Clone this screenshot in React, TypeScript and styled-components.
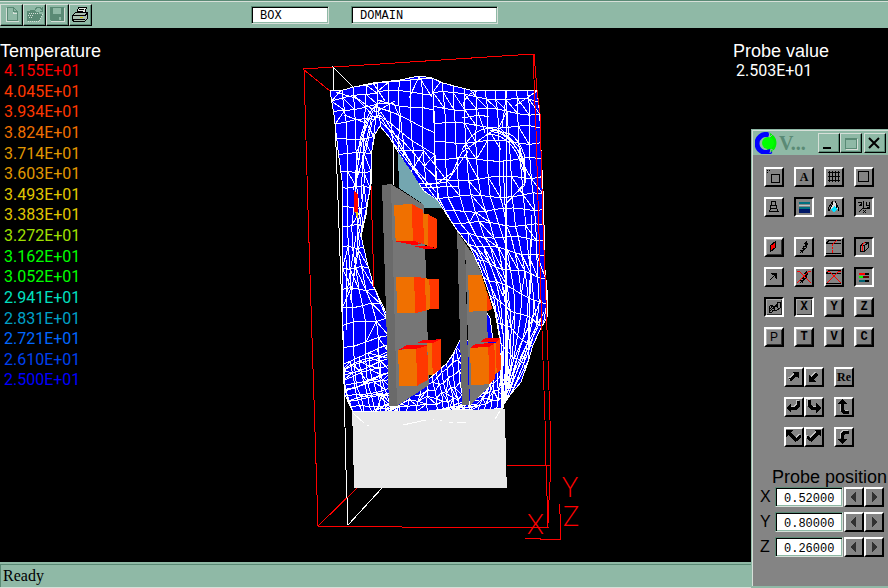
import React from "react";
import styled, { createGlobalStyle, css } from "styled-components";

const green = "#8fb9a6";
const darkGreen = "#5a8a75";
const paleGreen = "#d6dfd8";
const grey = "#848484";

const GlobalStyle = createGlobalStyle`
  * { box-sizing: border-box; }
  body { margin: 0; background: #000; font-family: "Liberation Sans", Arial, sans-serif; }
  button, input { font: inherit; margin: 0; padding: 0; border-radius: 0; }
  h1, h2, p, ul { margin: 0; padding: 0; font-weight: normal; }
  svg { display: block; }
`;

const Page = styled.div`
  position: relative;
  min-height: 100vh;
  display: flex;
  flex-direction: column;
  background: #000;
`;

const Toolbar = styled.header`
  display: flex;
  align-items: center;
  height: 28px;
  border-top: 1px solid ${darkGreen};
  box-shadow: inset 0 1px ${paleGreen};
  background: ${green};
`;

const ToolButton = styled.button`
  width: 23px;
  height: 22px;
  margin-top: 1px;
  background: ${green};
  border: 1px solid;
  border-color: ${paleGreen} #000 #000 ${paleGreen};
  box-shadow: inset -1px -1px ${darkGreen};
`;

const Fields = styled.div`
  display: flex;
  gap: 22px;
  margin-left: 159px;
`;

const Field = styled.input<{ $width: number }>`
  width: ${(p) => p.$width}px;
  height: 18px;
  padding: 3px 0 0 8px;
  font: 12px/14px "Liberation Mono", monospace;
  color: #000;
  background: #fff;
  border: 1px solid;
  border-color: ${darkGreen} ${paleGreen} ${paleGreen} ${darkGreen};
  box-shadow: inset 1px 1px #000, inset -1px -1px ${green};
  outline: none;
`;

const View = styled.main`
  flex: 1;
  display: grid;
  grid-template-columns: 1fr 300px 1fr;
  color: #fff;
`;

const Legend = styled.section`
  padding-top: 13px;
`;

const Caption = styled.h2`
  font-size: 18px;
  line-height: 20px;
`;

const Scale = styled.ul`
  display: grid;
  grid-auto-rows: 1fr;
  height: 330px;
  padding-left: 4px;
  list-style: none;
`;

const Reading = styled.li<{ $color: string }>`
  color: ${(p) => p.$color};
  font: 16px/20px Roboto, sans-serif;
`;

const Probe = styled.section`
  justify-self: end;
  width: 155px;
  padding-top: 13px;
`;

const ProbeValue = styled.p`
  padding-left: 3px;
  font: 16px/20px Roboto, sans-serif;
`;

const StatusBar = styled.footer`
  height: 26px;
  padding: 2px 3px;
  font: 16px/20px "Liberation Serif", serif;
  color: #000;
  background: ${green};
  border-top: 2px solid ${green};
  border-bottom: 1px solid ${paleGreen};
  box-shadow: inset 1px 1px ${darkGreen};
`;

const Window = styled.aside`
  position: absolute;
  right: 0;
  bottom: 0;
  width: 137px;
  background: ${grey};
  border: 1px solid ${green};
  border-width: 1px 0 2px 1px;
  box-shadow: inset 1px 1px ${paleGreen};
  padding: 1px 0 0 2px;
`;

const TitleBar = styled.div`
  display: flex;
  align-items: center;
  height: 24px;
  margin-left: -1px;
  padding: 0 2px 0 2px;
  background: ${green};
`;

const Title = styled.h1`
  flex: 1;
  margin-left: 2px;
  font: bold 20px/24px "Liberation Serif", serif;
  color: ${darkGreen};
`;

const WindowButton = styled.button`
  width: 22px;
  height: 20px;
  background: ${green};
  border: 1px solid;
  border-color: ${paleGreen} #000 #000 ${paleGreen};
  box-shadow: inset -1px -1px ${darkGreen};
  &:last-child { margin-left: 2px; }
`;

const Tools = styled.div`
  display: grid;
  grid-template-columns: repeat(4, 20px);
  gap: 10px;
  padding: 12px 0 0 10px;
  & + & { padding-top: 20px; }
`;

const Moves = styled.div`
  display: grid;
  grid-template-columns: 20px 30px 20px;
  row-gap: 10px;
  padding: 20px 0 0 30px;
`;

const IconButton = styled.button<{ $pressed?: boolean; $framed?: boolean; $font?: string }>`
  width: 20px;
  height: 20px;
  color: #000;
  background: ${grey};
  border: 2px solid;
  text-align: center;
  font: ${(p) => p.$font ?? 'bold 12px/14px "Liberation Mono", monospace'};
  ${(p) =>
    p.$pressed
      ? css`border-color: #000 #fff #fff #000;`
      : css`border-color: #fff #000 #000 #fff;`}
  ${(p) => p.$framed && css`box-shadow: inset 1px 1px #adadad, inset -1px -1px #303030;`}
`;

const Position = styled.section`
  padding: 20px 0 29px 6px;
`;

const PositionTitle = styled(Caption)`
  padding-left: 12px;
  color: #000;
  white-space: nowrap;
`;

const Axis = styled.div`
  display: flex;
  align-items: center;
  height: 20px;
  & + & { margin-top: 5px; }
`;

const AxisLabel = styled.label`
  width: 15px;
  font-size: 16px;
  line-height: 20px;
  color: #000;
`;

const AxisField = styled(Field)`
  height: 20px;
  margin-right: 1px;
`;

const Scene = styled.svg`
  width: 100%;
  height: auto;
`;

const readings: [string, string][] = [
  ["4.155E+01", "#ff0000"],
  ["4.045E+01", "#ff3800"],
  ["3.934E+01", "#ff3800"],
  ["3.824E+01", "#f07000"],
  ["3.714E+01", "#e09800"],
  ["3.603E+01", "#e09800"],
  ["3.493E+01", "#e0c800"],
  ["3.383E+01", "#e0c800"],
  ["3.272E+01", "#a0e000"],
  ["3.162E+01", "#00ff00"],
  ["3.052E+01", "#00ff00"],
  ["2.941E+01", "#00e0c0"],
  ["2.831E+01", "#00a0c8"],
  ["2.721E+01", "#0068ff"],
  ["2.610E+01", "#0040f0"],
  ["2.500E+01", "#0000ff"],
];

type Point = [number, number];
type Curve = Point[];

const toPath = (c: Curve) => "M" + c.map(([x, y]) => `${x.toFixed(1)} ${y.toFixed(1)}`).join("L");

const between = (a: Curve, b: Curve, t: number): Curve =>
  a.map(([x, y], i) => [x + (b[i][0] - x) * t, y + (b[i][1] - y) * t]);

const along = (c: Curve, t: number): Point => {
  const s = Math.min(t, 0.9999) * (c.length - 1);
  const i = Math.floor(s);
  const f = s - i;
  return [c[i][0] + (c[i + 1][0] - c[i][0]) * f, c[i][1] + (c[i + 1][1] - c[i][1]) * f];
};

/* A surface patch stretched between two curves: its rows, columns and some diagonals. */
function patch(a: Curve, b: Curve, cols: number, rows: number, diagonals: number): string {
  const out: string[] = [];
  const at = (i: number, j: number): Point => {
    const p = along(between(a, b, i / cols), j / rows);
    const inner = i > 0 && i < cols && j > 0 && j < rows;
    return inner ? [p[0] + Math.sin(i * 5 + j * 0.8), p[1] + Math.sin(i * 0.9 + j * 3) * 2] : p;
  };
  for (let i = 0; i <= cols; i++) {
    out.push(toPath(Array.from({ length: rows + 1 }, (_, j) => at(i, j))));
  }
  for (let j = 0; j <= rows; j++) {
    out.push(toPath(Array.from({ length: cols + 1 }, (_, i) => at(i, j))));
  }
  for (let i = 0; i < cols; i++) {
    for (let j = 0; j < rows; j++) {
      const pick = (i * 7 + j * 11 + i * j * 3) % 10;
      if (pick < diagonals) {
        out.push(pick % 2 ? toPath([at(i, j), at(i + 1, j + 1)]) : toPath([at(i + 1, j), at(i, j + 1)]));
      }
    }
  }
  return out.join("");
}

const leftEdge: Curve = [[330, 91], [334, 115], [338, 150], [342, 190], [343, 236], [342, 287], [343, 330], [344, 385], [353, 412]];
const holeLeft: Curve = [[378, 83], [377, 108], [372, 150], [370, 190], [361, 236], [374, 287], [388, 322], [390, 365], [398, 412]];
const holeRight: Curve = [[432, 78], [434, 110], [434, 150], [437, 195], [452, 223], [470, 247], [486, 285], [499, 335], [502, 411]];
const rightEdge: Curve = [[537, 90], [540, 117], [541, 150], [543, 190], [544, 225], [545, 260], [547, 317], [528, 362], [503, 408]];

const mesh = [
  patch(leftEdge, holeLeft, 4, 19, 3),
  patch([[378, 83], [377, 100], [379, 115], [381, 127]], [[432, 78], [434, 110], [435, 155], [438, 201]], 5, 6, 1),
  patch(holeRight, rightEdge, 10, 18, 2),
  patch([[342, 365], [344, 388], [353, 412]], [[386, 345], [392, 375], [400, 411]], 5, 9, 3),
  patch([[398, 398], [432, 375], [460, 340]], [[375, 411], [438, 411], [470, 409]], 5, 12, 3),
  patch([[466, 405], [488, 390], [502, 350]], [[430, 411], [475, 411], [503, 408]], 5, 9, 2),
].join("");

const folds = [
  "M357 160Q363 110 380 103L394 104 400 118 398 150",
  "M355 200Q359 120 382 100M353 190L366 150 372 122 381 112 397 138 412 165 436 192",
  "M361 200L363 155 372 116 382 119 400 147 424 183",
  "M344 115L366 123M336 92L358 99 376 112 395 101M373 83L385 101M409 98L419 77 432 97",
  "M409 175L424 151M424 151L445 178M400 150L424 151",
  "M417 183L436 184 452 173 462 152 491 132Q506 130 523 158L525 185 514 195",
  "M462 150Q478 120 502 132Q516 132 524 154L526 182 505 205M485 133L478 112",
  "M490 130Q512 130 524 165M488 134Q514 135 523 170M500 128L520 148 526 178",
  "M463 106Q466 91 483 90M462 118L480 115 489 117M515 106L537 91M507 90L502 128",
  "M506 100L506 404M503 160L505 205 505 400M501 150L490 132",
  "M532 215L530 280 528 360M531 240L529 350",
  "M425 185L447 182 468 151M422 188L458 186",
  "M360 155L355 180 358 232M355 170L362 235M368 118L358 150",
  "M347 292L356 236M352 290L359 232M346 330L346 260M350 300L360 240",
  "M541 320L520 365 502 404M544 312L524 350 502 398M541 300L518 350 501 390M478 262L499 320",
  "M475 250L497 300 504 340M484 250L503 296",
].join("");

const surface =
  "330,91 343,90 354,87 373,83 400,80 419,76 432,78 443,83 458,87 470,90 537,90 540,117 541,150 543,190 544,225 544,260 547,290 547,317 540,330 533,345 528,362 521,382 510,395 504,404 502,411 353,412 345,395 344,370 343,340 342,290 343,225 342,180 338,150 334,115";

function HeatScene() {
  return (
    <Scene viewBox="294 28 300 534" role="img" aria-label="Temperature surface over the domain" shapeRendering="crispEdges">
      <clipPath id="surface"><polygon points={surface} /></clipPath>
      <g fill="none" stroke="#fff">
        <path d="M353 87L333 67L338 200L343 340L346 470L348 525L382 488" />
      </g>
      <polygon points={surface} fill="#0000ff" stroke="#fff" />
      <g clipPath="url(#surface)" fill="none" stroke="#fff">
        <path d={mesh} />
        <path d={folds} />
      </g>
      <polygon
        points="380,126 375,134 372,150 371,185 368,200 366,215 361,236 367,262 374,287 381,302 387,315 390,370 428,380 437,372 447,363 453,354 460,340 480,340 487,313 490,318 493,340 500,340 495,312 488,290 481,270 470,247 457,230 447,215 438,201 424,191 412,175 398,152 390,138"
        fill="#000"
        stroke="#fff"
      />
      <polygon points="398,152 399,188 423,204 424,208 442,208 437,200 423,191 415,177" fill="#74a6b0" />
      <path d="M371 185L374 287" stroke="#f00" />
      <path d="M393 140L394 185" stroke="#fff" />
      <polygon points="382,185 391,184 397,406 389,406" fill="#6a6a6a" />
      <polygon points="391,184 424,205 429,385 397,406" fill="#767676" />
      <polygon points="457,231 465,243 469,405 462,405" fill="#6a6a6a" />
      <polygon points="465,243 474,256 482,275 487,313 489,386 470,405" fill="#767676" />
      <polygon points="354,191 358,195 358,212 354,212" fill="#f00" />
      <polygon points="355,212 358,212 358,219" fill="#e0c800" />
      <g transform="translate(290 200) scale(.3333)">
        <g fill="#f07000">
          <polygon points="312,15 365,12 369,122 317,124" />
          <polygon points="399,40 413,42 414,138 402,132" />
          <polygon points="318,232 372,230 376,339 322,340" />
          <polygon points="405,234 418,237 421,327 408,332" />
          <polygon points="324,450 378,446 382,557 328,557" />
          <polygon points="412,430 426,430 428,525 414,525" />
          <polygon points="534,226 575,225 592,280 592,333 538,335" />
          <polygon points="540,443 595,441 598,553 544,555" />
          <polygon points="612,430 618,427 620,520 615,522" />
        </g>
        <g fill="#ff3800">
          <polygon points="365,12 399,30 402,132 369,122" />
          <polygon points="413,42 441,57 442,145 414,138" />
          <polygon points="372,230 405,234 408,332 376,339" />
          <polygon points="418,237 447,238 448,327 421,327" />
          <polygon points="378,446 412,436 414,540 382,557" />
          <polygon points="426,430 452,418 453,507 428,525" />
          <polygon points="592,278 608,327 592,333" />
          <polygon points="595,441 613,430 616,535 598,553" />
          <polygon points="618,427 629,415 634,508 620,522" />
        </g>
        <g fill="#ff0000">
          <polygon points="317,124 369,122 402,133 365,134" />
          <polygon points="369,138 414,138 444,147 400,146" />
          <polygon points="326,449 352,435 412,436 378,447" />
          <polygon points="378,430 400,420 452,418 426,430" />
          <polygon points="542,443 558,431 613,430 595,442" />
          <polygon points="570,426 585,415 629,415 618,427" />
        </g>
      </g>
      <polygon points="352,412 505,409 506,465 507,488 354,488 353,440" fill="#e8e8e8" />
      <path d="M353 413L364 423M367 425h2M403 425L426 420M433 419h1M440 420h2M449 422h4M457 422h9M500 411L495 419" fill="none" stroke="#fff" />
      <g fill="none" stroke="#f00">
        <path d="M330 91L303 69L533 54L536 130L538 200L541 300L545 420L546 465L548 527H402L318 526L357 488M304 69L308 210L311 306L314 400L318 526" />
        <path d="M534 54L537 90L540 113L543 225L546 300L547 330L550 420L551 465L549 500L548 524M507 465H551" />
        <path d="M525 538H540V539H560V514L559 504" />
      </g>
      <g fill="#f00" fontFamily="Lato" fontWeight="300" fontSize="27">
        <text x="527" y="534">X</text>
        <text x="562" y="497">Y</text>
        <text x="563" y="526">Z</text>
      </g>
    </Scene>
  );
}

const Glyph = ({ children }: { children: React.ReactNode }) => (
  <svg viewBox="2 2 16 16" width="16" height="16" shapeRendering="crispEdges" fill="none" stroke="#000" aria-hidden="true">
    {children}
  </svg>
);

const Squiggle = () => <path d="M13 4l-2 3v2l-2 2v2l-3 3M14 6l-2 3v2l-3 3-1 2M10 6h4M9 9h4M8 11l3 1M6 13l3 1" />;
const Slab = () => <path d="M2 6.500h15M2 16.500h15M5 3.500h12M5 3.500l-3 3" />;
const Cross = () => <path stroke="#f00" d="M3 4l2 0 10 10 2 2M17 4h-2L5 14l-2 2" />;

const upperTools: { name: string; pressed?: boolean; framed?: boolean; font?: string; face: React.ReactNode }[] = [
  { name: "Select", face: <Glyph><path d="M3 3.500h1M5 3.500h1M3 5.500h1" /><rect x="7.500" y="7.500" width="8" height="8" /></Glyph> },
  { name: "Text", font: 'bold 12px/14px "Liberation Serif", serif', face: "A" },
  { name: "Grid", face: <Glyph><path d="M5.500 4v11M8.500 4v11M11.500 4v11M14.500 4v11M4 5.500h12M4 9.500h12M4 13.500h12" /></Glyph> },
  { name: "Outline", face: <Glyph><rect x="4.500" y="4.500" width="10" height="10" /></Glyph> },
  { name: "Perspective", face: <Glyph><path d="M7.500 8.500v-4h4v4M6.500 11.500v-3h6v3M5.500 14.500l1-3h6l2 3z" /></Glyph> },
  { name: "Contour", pressed: true, face: <Glyph><g stroke="none"><path fill="#007080" d="M5 5h11v2H5zM5 10h11v2H5z" /><path fill="#b8c8cc" d="M5 8h11v1H5z" /><path fill="#001868" d="M5 12h11v4H5z" /></g></Glyph> },
  { name: "Light", face: <Glyph><path fill="#e0e0e0" stroke="none" d="M9 5h2l3 7H7z" /><path d="M4 14l1-4 4-6M5 14l4-8M11 4l3 6 1 4M12 6l1 5" /><path fill="#00e0ff" stroke="none" d="M10 9l3 3-2 3h-2l-2-3z" /></Glyph> },
  {
    name: "Axes",
    pressed: true,
    face: (
      <Glyph>
        <path d="M9.500 4v7M9 11.500h7M9 11l-4 4M9 13l3 3M12 13l-3 3M4 5.500h3v2l-2 1h3M12.500 5v3h3M15.500 5v5h-3" />
      </Glyph>
    ),
  },
];

const lowerTools: typeof upperTools = [
  { name: "Plane", framed: true, face: <Glyph><path fill="#f00" d="M6.500 14.500v-6l5-4v6z" /></Glyph> },
  { name: "Path", face: <Glyph><Squiggle /></Glyph> },
  { name: "Section", face: <Glyph><Slab /><path stroke="#f00" d="M13 3l-4 4M8.500 7v2M8.500 10v2M8.500 13v3" /></Glyph> },
  { name: "Solid", pressed: true, face: <Glyph><path d="M6.500 14.500v-6h4v6zM6.500 8.500l4-3h4v5l-4 4M10.500 8.500l4-3" /><path stroke="#f00" d="M8 14V8l3-3" /></Glyph> },
  { name: "Vector", face: <Glyph><path d="M6 13l6-6M7 6.500h5.500V12M8 7.500h4M11.500 8v3" /></Glyph> },
  { name: "Clear path", face: <Glyph><Squiggle /><Cross /></Glyph> },
  { name: "Clear section", face: <Glyph><Slab /><Cross /></Glyph> },
  { name: "Legend", pressed: true, face: <Glyph><g stroke="none"><path fill="#f00" d="M5 6h6v2H5z" /><path d="M11 6h4v2h-4z" fill="#000" /><path fill="#0f0" d="M5 9h4v2H5z" /><path fill="#500" d="M9 9h6v2H9z" /><path fill="#006070" d="M5 13h6v2H5z" /><path fill="#000" d="M11 13h4v2h-4z" /></g></Glyph> },
  { name: "Duct", pressed: true, framed: true, face: <Glyph><path d="M5 10l2-2 3 2 3-3V5h3v6l-3 2H9l-1 2H5zM7 8v3l-2 2M10 10v3M13 7l1 4M8 12l6-4M6 14l4-4" /></Glyph> },
  { name: "X plane", pressed: true, framed: true, face: "X" },
  { name: "Y plane", framed: true, face: "Y" },
  { name: "Z plane", framed: true, face: "Z" },
  { name: "Pressure", framed: true, font: '12px/14px "Liberation Sans", sans-serif', face: "P" },
  { name: "Temperature", framed: true, face: "T" },
  { name: "Velocity", framed: true, face: "V" },
  { name: "Concentration", framed: true, face: "C" },
];

const Arrow = ({ d, head }: { d: string; head: string }) => (
  <Glyph>
    <path d={d} stroke="#c0c0c0" strokeWidth="3" transform="translate(-1 -1)" />
    <path d={d} strokeWidth="3" />
    <path d={head} fill="#000" stroke="none" />
  </Glyph>
);

const moves: { name: string; font?: string; face: React.ReactNode }[] = [
  { name: "Zoom in", face: <Arrow d="M6 13L12 8" head="M8 5h7v7z" /> },
  { name: "Zoom out", face: <Arrow d="M13 7L8 12" head="M5 8v7h7z" /> },
  { name: "Reset", font: 'bold 12px/14px "Liberation Serif", serif', face: "Re" },
  { name: "Turn left", face: <Arrow d="M14 4V9L12 11H6" head="M2 11l5-5v10z" /> },
  { name: "Turn right", face: <Arrow d="M5 3V8L8 11H13" head="M17 11l-5-5v10z" /> },
  { name: "Tilt up", face: <Arrow d="M8 7V13L10 15H15" head="M8 2l5 5H3z" /> },
  { name: "Roll left", face: <Arrow d="M5 6L12 13L17 9" head="M2 3h7l-7 7z" /> },
  { name: "Roll right", face: <Arrow d="M3 10L7 13L14 6" head="M17 3h-7l7 7z" /> },
  { name: "Tilt down", face: <Arrow d="M15 5H11L8 8V12" head="M8 17l-5-5h10z" /> },
];

const axes = [
  { name: "X", value: "0.52000" },
  { name: "Y", value: "0.80000" },
  { name: "Z", value: "0.26000" },
];

const ToolGlyph = ({ children }: { children: React.ReactNode }) => (
  <svg viewBox="1 1 21 20" width="21" height="20" shapeRendering="crispEdges" fill="none" stroke={darkGreen} aria-hidden="true">
    {children}
  </svg>
);

function FileTools() {
  return (
    <>
      <ToolButton aria-label="New">
        <ToolGlyph>
          <path stroke={paleGreen} d="M6.500 4v13.500h12M13 4v5h5" />
          <path d="M7.500 16.500v-13h6l4 4v9zM13.500 3.500v4h4" />
        </ToolGlyph>
      </ToolButton>
      <ToolButton aria-label="Open">
        <ToolGlyph>
          <path fill={darkGreen} d="M4.500 16.500v-9h2l1-1h4l1 2h3v2h4l-4 6z" />
          <path stroke={paleGreen} strokeDasharray="1 1" d="M6 9h9M5 11h5M6 13h3M5 17.500h11l4-7" />
          <path d="M12 5.500l2-2h3l2 2M19.500 3v4h-3" />
        </ToolGlyph>
      </ToolButton>
      <ToolButton aria-label="Save">
        <ToolGlyph>
          <path fill={darkGreen} d="M4.500 3.500h13v13h-12l-1-1z" />
          <path fill={green} stroke="none" d="M7 4h8v6H7zM13 13h2v3h-2z" />
          <path stroke={paleGreen} d="M5 17.500h13.500V4" />
        </ToolGlyph>
      </ToolButton>
      <ToolButton aria-label="Print">
        <ToolGlyph>
          <path stroke="#000" fill="#e4ece4" d="M7.500 9.500l2-6h8l-2 6z" />
          <path stroke="#000" d="M10 5.500h5M9 7.500h5" />
          <path stroke="#000" fill="#a8c0b0" d="M3.500 11.500l3-3h11l1 2v4l-3 3h-11l-1-2z" />
          <path stroke="#000" d="M4 11.500h12l3-3M4 15.500h12" />
          <path stroke="#d0c000" d="M11 13.500h3" />
        </ToolGlyph>
      </ToolButton>
    </>
  );
}

export default function App() {
  return (
    <Page>
      <GlobalStyle />
      <Toolbar>
        <FileTools />
        <Fields>
          <Field aria-label="Object type" $width={78} defaultValue="BOX" />
          <Field aria-label="Object name" $width={147} defaultValue="DOMAIN" />
        </Fields>
      </Toolbar>
      <View>
        <Legend>
          <Caption>Temperature</Caption>
          <Scale>
            {readings.map(([value, color]) => (
              <Reading key={value} $color={color}>{value}</Reading>
            ))}
          </Scale>
        </Legend>
        <HeatScene />
        <Probe>
          <Caption>Probe value</Caption>
          <ProbeValue>2.503E+01</ProbeValue>
        </Probe>
      </View>
      <StatusBar>Ready</StatusBar>
      <Window>
        <TitleBar>
          <svg viewBox="0 0 22 22" width="22" height="22" aria-hidden="true">
            <path d="M15 1a11 11 0 0 1 3 18l-4 2-3-6 4-9z" fill="#00f000" />
            <path d="M14 3A9 9 0 1 0 16 19" fill="none" stroke="#0000ff" strokeWidth="5" />
            <circle cx="13" cy="11" r="6" fill="#00ff00" />
            <path d="M14 0l1 5 3-3M15 21l1-4 3 2" fill="none" stroke={green} />
          </svg>
          <Title>V...</Title>
          <WindowButton aria-label="Minimize">
            <svg viewBox="0 0 20 18" width="20" height="18" aria-hidden="true"><path fill="#000" d="M4 13h8v2H4z" /></svg>
          </WindowButton>
          <WindowButton aria-label="Maximize">
            <svg viewBox="0 0 20 18" width="20" height="18" fill="none" shapeRendering="crispEdges" aria-hidden="true">
              <path stroke={paleGreen} d="M5 15.500h11.500V5" /><path stroke={darkGreen} d="M4.500 4.500h11v10h-11zM4 5.500h11" />
            </svg>
          </WindowButton>
          <WindowButton aria-label="Close">
            <svg viewBox="0 0 20 18" width="20" height="18" aria-hidden="true"><path stroke="#000" strokeWidth="2" d="M4 4l10 10M14 4L4 14" /></svg>
          </WindowButton>
        </TitleBar>
        {[upperTools, lowerTools].map((group, i) => (
          <Tools key={i}>
            {group.map((t) => (
              <IconButton key={t.name} aria-label={t.name} $pressed={t.pressed} $framed={t.framed} $font={t.font}>{t.face}</IconButton>
            ))}
          </Tools>
        ))}
        <Moves>
          {moves.map((m) => (
            <IconButton key={m.name} aria-label={m.name} $font={m.font}>{m.face}</IconButton>
          ))}
        </Moves>
        <Position>
          <PositionTitle>Probe position</PositionTitle>
          {axes.map((a) => (
            <Axis key={a.name}>
              <AxisLabel htmlFor={`axis-${a.name}`}>{a.name}</AxisLabel>
              <AxisField id={`axis-${a.name}`} $width={68} defaultValue={a.value} />
              <IconButton aria-label={`Decrease ${a.name}`}><Glyph><path fill="#303030" stroke="none" d="M12 5v10L6 10z" /></Glyph></IconButton>
              <IconButton aria-label={`Increase ${a.name}`}><Glyph><path fill="#303030" stroke="none" d="M8 5v10l6-5z" /></Glyph></IconButton>
            </Axis>
          ))}
        </Position>
      </Window>
    </Page>
  );
}
